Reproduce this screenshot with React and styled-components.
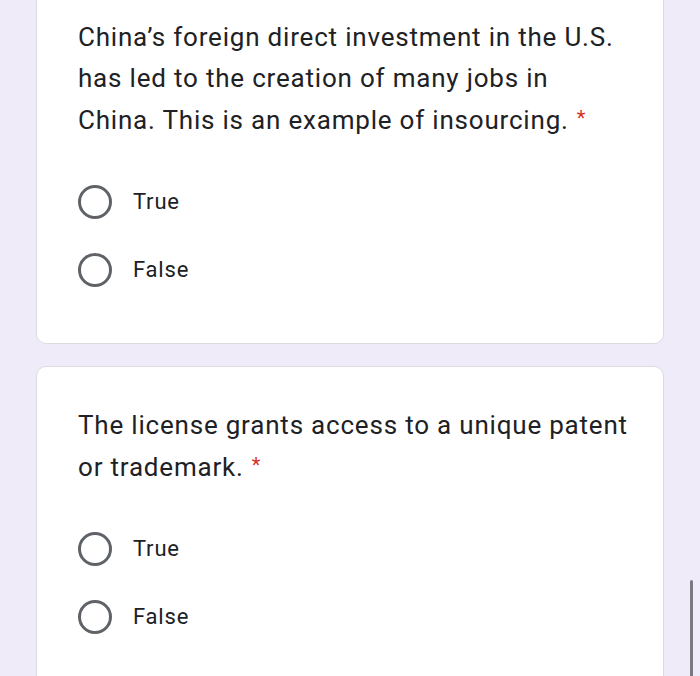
import React from "react";
import styled, { createGlobalStyle } from "styled-components";

const Global = createGlobalStyle`
  html, body { margin: 0; padding: 0; }
  body {
    background: #f0ebf8;
    font-family: Roboto, "Noto Sans", Arial, sans-serif;
    color: #202124;
    overflow: hidden;
  }
`;

const Page = styled.div`
  width: 700px;
  height: 676px;
  overflow: hidden;
  position: relative;
  padding-left: 36px;
  box-sizing: border-box;
`;

const Stack = styled.div`
  width: 628px;
  display: flex;
  flex-direction: column;
  gap: 22px;
  margin-top: -20px;
`;

const Card = styled.section`
  background: #fff;
  border: 1px solid #dadce0;
  border-radius: 10px;
  padding: ${(p) => p.$pad};
  box-sizing: border-box;
`;

const Question = styled.div`
  font-size: 26px;
  line-height: 40.5px;
  letter-spacing: 0.8px;
  color: #202124;
`;

const Star = styled.span`
  color: #d93025;
  font-size: 20px;
  margin-left: 8px;
  vertical-align: 4px;
`;

const Options = styled.div`
  display: flex;
  flex-direction: column;
  gap: 34px;
  margin-top: 44px;
`;

const Option = styled.label`
  display: flex;
  align-items: center;
  gap: 21px;
  height: 34px;
`;

const Radio = styled.span`
  width: 34px;
  height: 34px;
  border-radius: 50%;
  border: 3px solid #5f6368;
  box-sizing: border-box;
  flex: none;
`;

const Label = styled.span`
  font-size: 22px;
  letter-spacing: 0.8px;
  color: #202124;
`;

const Scrollbar = styled.div`
  position: absolute;
  left: 690px;
  top: 580px;
  width: 3px;
  height: 110px;
  border-radius: 2px;
  background: #7b7882;
`;

const questions = [
  {
    text: "China’s foreign direct investment in the U.S. has led to the creation of many jobs in China. This is an example of insourcing.",
    pad: "36px 33px 56px 41px",
  },
  {
    text: "The license grants access to a unique patent or trademark.",
    pad: "38px 33px 58px 41px",
  },
];

export default function App() {
  return (
    <>
      <Global />
      <Page>
        <Stack>
          {questions.map((q, i) => (
            <Card key={i} $pad={q.pad}>
              <Question>
                {q.text}
                <Star>*</Star>
              </Question>
              <Options>
                {["True", "False"].map((o) => (
                  <Option key={o}>
                    <Radio />
                    <Label>{o}</Label>
                  </Option>
                ))}
              </Options>
            </Card>
          ))}
        </Stack>
        <Scrollbar />
      </Page>
    </>
  );
}
